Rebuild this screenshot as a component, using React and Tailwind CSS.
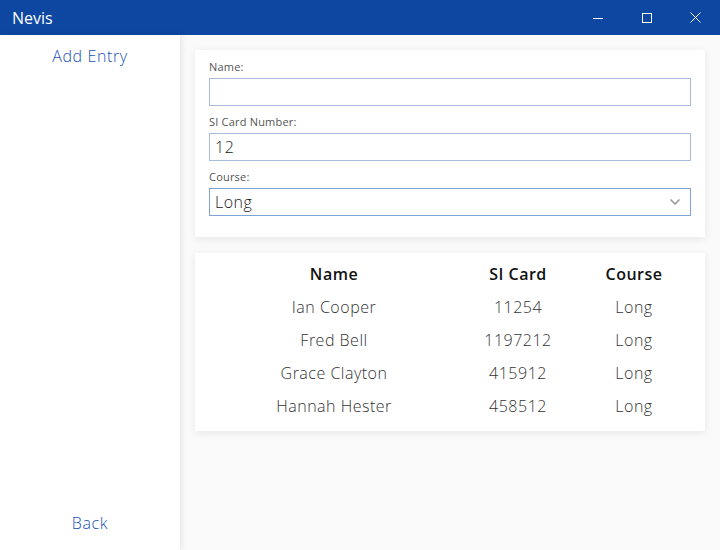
import { ChevronDown } from 'lucide-react'

const entries = [
    { name: 'Ian Cooper', card: '11254', course: 'Long' },
    { name: 'Fred Bell', card: '1197212', course: 'Long' },
    { name: 'Grace Clayton', card: '415912', course: 'Long' },
    { name: 'Hannah Hester', card: '458512', course: 'Long' },
]

const font = { fontFamily: '"Open Sans", "DejaVu Sans", sans-serif' }

const TitleBar = () => (
    <div className="flex h-[35px] items-center justify-between bg-[#0d47a1] text-white">
        <span className="pl-3 text-[16px] font-medium">Nevis</span>
        <div className="flex h-full">
            <button className="flex h-full w-[49px] items-center justify-center">
                <svg width="10" height="10" viewBox="0 0 10 10">
                    <path d="M0 5.5h10" stroke="white" strokeWidth="1" />
                </svg>
            </button>
            <button className="flex h-full w-[49px] items-center justify-center">
                <svg width="10" height="10" viewBox="0 0 10 10">
                    <rect x="0.5" y="0.5" width="9" height="9" fill="none" stroke="white" strokeWidth="1" />
                </svg>
            </button>
            <button className="flex h-full w-[49px] items-center justify-center">
                <svg width="11" height="11" viewBox="0 0 11 11">
                    <path d="M0.5 0.5l10 10M10.5 0.5l-10 10" stroke="white" strokeWidth="1" />
                </svg>
            </button>
        </div>
    </div>
)

const Field = ({ label, value, select }) => (
    <div className="flex flex-col">
        <label className="mb-[5px] text-[11px] leading-[13px] tracking-[0.2px] text-[#555]">{label}</label>
        <div
            className={`flex h-[28px] items-center justify-between border px-[5px] text-[16px] font-light tracking-[0.5px] text-[#222] ${
                select ? 'border-[#7fa2d9]' : 'border-[#a9bcd9]'
            }`}
        >
            <span>{value}</span>
            {select && <ChevronDown className="mr-[2px] h-4 w-4 text-[#999]" strokeWidth={2.5} />}
        </div>
    </div>
)

const App = () => {
    return (
        <div className="flex h-[550px] w-[720px] flex-col overflow-hidden" style={font}>
            <TitleBar />
            <div className="flex flex-1 bg-[#fafafa]">
                {/* Sidebar */}
                <div className="z-10 flex w-[180px] flex-col items-center justify-between bg-white pt-[9px] pb-[15px] shadow-[2px_0_6px_rgba(0,0,0,0.08)]">
                    <span className="text-[16px] font-light tracking-[0.6px] text-[#1a52b5]">Add Entry</span>
                    <span className="text-[16px] font-light tracking-[0.6px] text-[#1a52b5]">Back</span>
                </div>

                {/* Main */}
                <div className="flex flex-1 flex-col gap-4 p-[15px]">
                    <div className="flex flex-col gap-[9px] bg-white px-[14px] pt-[10px] pb-[21px] shadow-[0_2px_8px_rgba(0,0,0,0.08)]">
                        <Field label="Name:" value="" />
                        <Field label="SI Card Number:" value="12" />
                        <Field label="Course:" value="Long" select />
                    </div>

                    <div className="bg-white px-[14px] pt-[5px] pb-[8px] shadow-[0_2px_8px_rgba(0,0,0,0.08)]">
                        <div className="grid grid-cols-[250px_118px_114px] text-center text-[16px] leading-[33px] tracking-[0.5px]">
                            <div className="font-semibold text-[#111]">Name</div>
                            <div className="font-semibold text-[#111]">SI Card</div>
                            <div className="font-semibold text-[#111]">Course</div>
                            {entries.map((e) => [
                                <div key={e.name + 'n'} className="font-light text-[#333]">{e.name}</div>,
                                <div key={e.name + 'c'} className="font-light text-[#333]">{e.card}</div>,
                                <div key={e.name + 'r'} className="font-light text-[#333]">{e.course}</div>,
                            ])}
                        </div>
                    </div>
                </div>
            </div>
        </div>
    )
}

export default App
